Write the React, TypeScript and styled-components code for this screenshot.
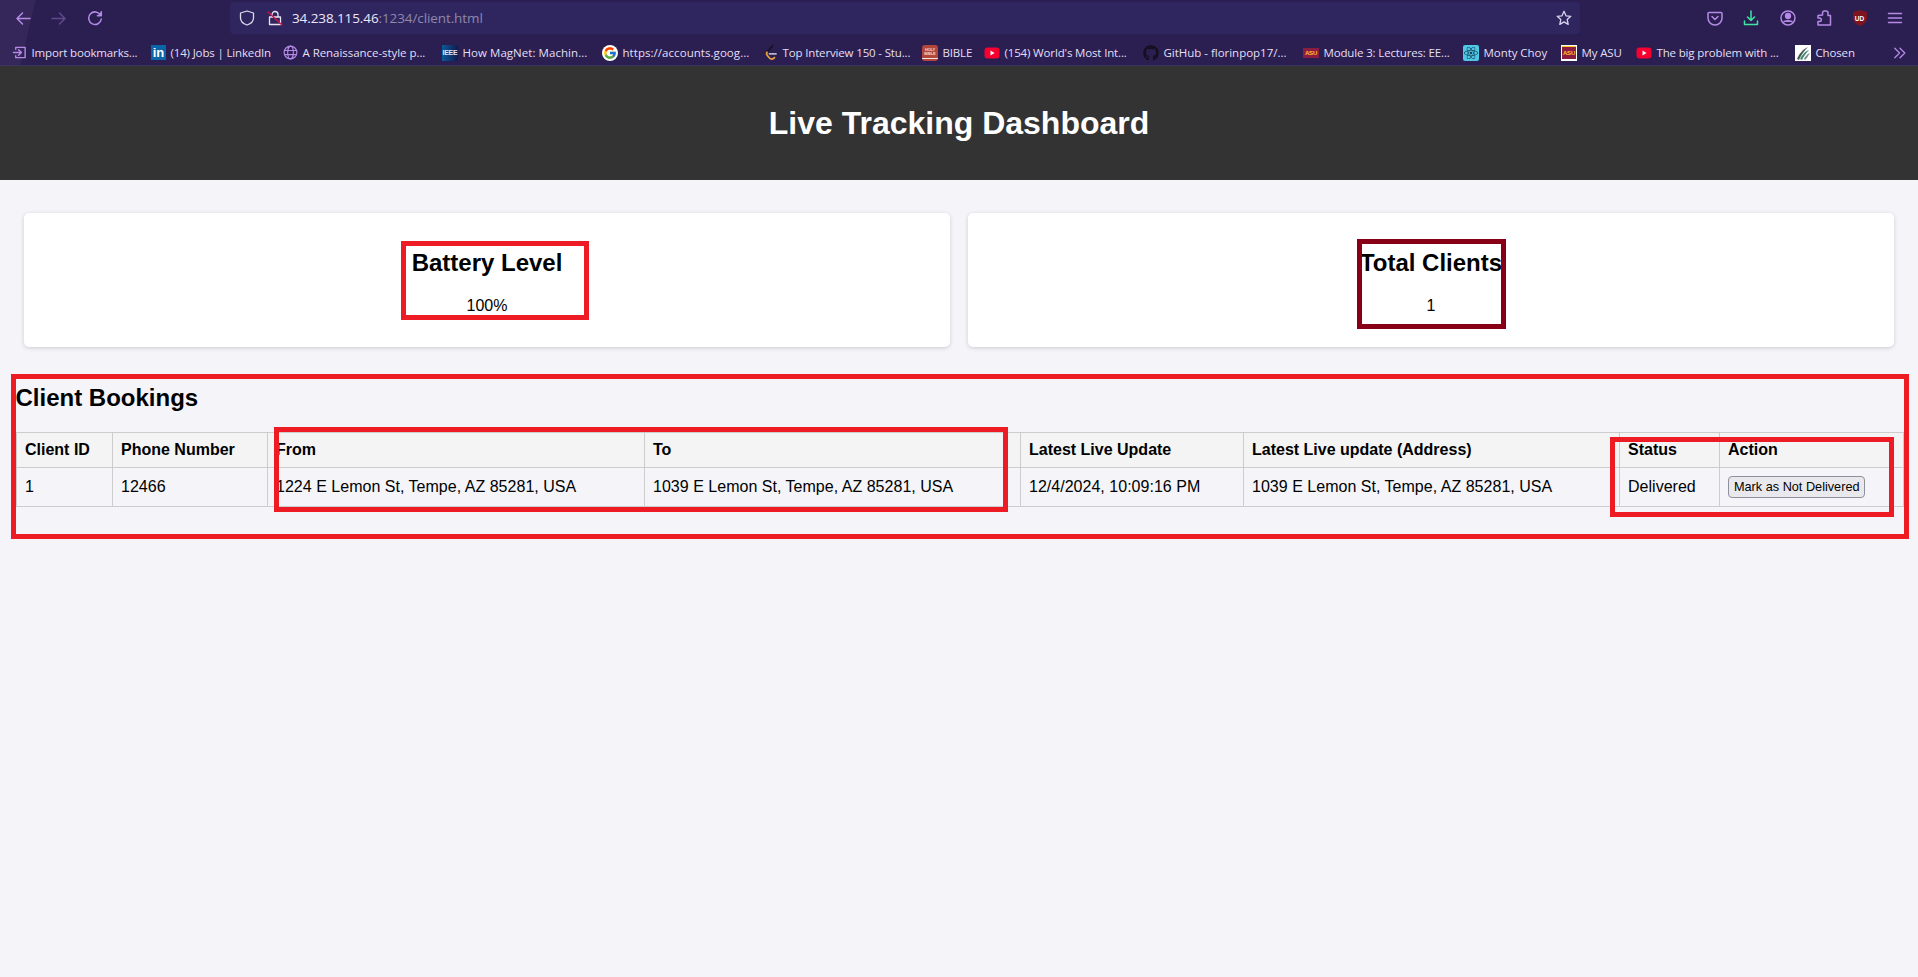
import React from "react";
import styled, { createGlobalStyle } from "styled-components";
import { FcGoogle } from "react-icons/fc";
import { FaGithub, FaReact } from "react-icons/fa";

const Global = createGlobalStyle`
  html, body { margin: 0; padding: 0; background: #f4f4f9; }
  body { font-family: "Liberation Sans", Arial, sans-serif; color: #000; overflow: hidden; }
`;

const Page = styled.div`
  position: relative;
  width: 1918px;
  height: 977px;
  overflow: hidden;
  background: #f4f4f9;
`;

const BrowserChrome = styled.div`
  height: 66px;
  background: linear-gradient(103deg, #35275a 0, #35275a 34px, #2b1f52 35px, #2b1f52 100%);
  font-family: "Open Sans", "Noto Sans", sans-serif;
  box-sizing: border-box;
`;

const Toolbar = styled.div`
  height: 36px;
  display: flex;
  align-items: center;
`;

const NavGroup = styled.div`
  width: 230px;
  padding-left: 15px;
  box-sizing: border-box;
  display: flex;
  align-items: center;
  gap: 20px;
  flex: none;
`;

const UrlBar = styled.div`
  width: 1350px;
  height: 32px;
  flex: none;
  box-sizing: border-box;
  padding: 0 8px 0 9px;
  background: #30265f;
  border-radius: 4px;
  display: flex;
  align-items: center;
`;

const UrlIcons = styled.div`
  display: flex;
  align-items: center;
  gap: 12px;
  width: 53px;
  flex: none;
`;

const UrlText = styled.div`
  flex: 1;
  font-size: 13.5px;
  color: #8e88ab;
  white-space: nowrap;
  letter-spacing: -0.1px;
`;

const UrlHost = styled.span`
  color: #eae6f6;
`;

const ActionGroup = styled.div`
  flex: 1;
  display: flex;
  align-items: center;
  padding-left: 127px;
  gap: 20.4px;
`;

const BookmarkBar = styled.div`
  height: 30px;
  padding: 4px 0 0 12px;
  display: flex;
  align-items: center;
  border-bottom: 1px solid #3c3560;
  box-sizing: border-box;
`;

const Bookmark = styled.div<{ $w: number; $ls?: number }>`
  width: ${(p) => p.$w}px;
  flex: none;
  display: flex;
  align-items: center;
  gap: 4.5px;
  font-size: 11.5px;
  color: #e3dff3;
  white-space: nowrap;
  letter-spacing: ${(p) => p.$ls ?? -0.15}px;
  overflow: hidden;
`;

const Overflow = styled.div`
  margin-left: 5px;
  display: flex;
  align-items: center;
`;

const Favicon = styled.span<{ $bg: string; $fg?: string; $size?: number }>`
  width: ${(p) => p.$size ?? 16}px;
  height: ${(p) => p.$size ?? 16}px;
  flex: none;
  display: inline-flex;
  align-items: center;
  justify-content: center;
  background: ${(p) => p.$bg};
  color: ${(p) => p.$fg || "#fff"};
  font-family: "Liberation Sans", Arial, sans-serif;
`;

const LinkedInMark = styled.span`
  font-size: 13px;
  font-weight: 700;
  line-height: 15px;
`;

const IeeeMark = styled.span`
  font-size: 7px;
  font-weight: 700;
  letter-spacing: -0.3px;
`;

const BibleCover = styled.span`
  width: 16px;
  height: 16px;
  flex: none;
  border-radius: 3px;
  background: linear-gradient(#b3463b 0 80%, #f0e6e0 80% 90%, #b3463b 90%);
  color: #f0d6c8;
  font-family: "Liberation Sans", Arial, sans-serif;
  font-size: 4px;
  font-weight: 700;
  line-height: 4.5px;
  text-align: center;
  padding-top: 3px;
  box-sizing: border-box;
`;

const AsuMark = styled.span<{ $framed?: boolean }>`
  width: 16px;
  height: ${(p) => (p.$framed ? 16 : 10)}px;
  flex: none;
  box-sizing: border-box;
  display: inline-flex;
  align-items: center;
  justify-content: center;
  background: #8c1d40;
  color: #ffc627;
  font-family: "Liberation Sans", Arial, sans-serif;
  font-size: 6px;
  font-weight: 700;
  border-top: ${(p) => (p.$framed ? "2px solid #ffc627" : "none")};
  border-bottom: ${(p) => (p.$framed ? "2px solid #fff" : "none")};
  outline: ${(p) => (p.$framed ? "1px solid #fff" : "none")};
  outline-offset: -1px;
`;

const ShieldBadge = styled.span`
  position: relative;
  width: 14px;
  height: 16px;
  display: inline-flex;
  align-items: center;
  justify-content: center;
`;

const ShieldLabel = styled.span`
  position: absolute;
  inset: 0;
  display: flex;
  align-items: center;
  justify-content: center;
  font-family: "Liberation Sans", Arial, sans-serif;
  font-size: 6.5px;
  font-weight: 700;
  color: #fff;
`;

const TitleBar = styled.header`
  height: 114px;
  background: #333;
  display: flex;
  align-items: center;
  justify-content: center;
`;

const Title = styled.h1`
  margin: 0;
  font-size: 32px;
  font-weight: 700;
  color: #fff;
`;

const Stats = styled.section`
  display: flex;
  gap: 18px;
  padding: 33px 24px 0;
`;

const Card = styled.div`
  flex: 1;
  height: 134px;
  box-sizing: border-box;
  padding: 16px;
  background: #fff;
  border-radius: 5px;
  box-shadow: 0 1px 4px rgba(0, 0, 0, 0.17);
  text-align: center;
`;

const CardTitle = styled.h2`
  margin: 20px 0;
  font-size: 24px;
  font-weight: 700;
`;

const CardValue = styled.p`
  margin: 0;
  font-size: 16px;
`;

const Bookings = styled.section`
  padding: 17px 15px 0 16px;
`;

const BookingsTitle = styled.h2`
  margin: 20px 0 20px -0.5px;
  font-size: 24px;
  font-weight: 700;
`;

const Table = styled.table`
  width: 1887px;
  table-layout: fixed;
  border-collapse: collapse;
`;

const Col = styled.col<{ $w: number }>`
  width: ${(p) => p.$w}px;
`;

const Th = styled.th`
  border: 1px solid #ccc;
  padding: 8px;
  background: #f4f4f4;
  font-size: 16px;
  font-weight: 700;
  text-align: left;
`;

const Td = styled.td`
  border: 1px solid #ccc;
  padding: 8px;
  font-size: 16px;
  text-align: left;
  letter-spacing: 0.02px;
`;

const ActionButton = styled.button`
  display: block;
  height: 22px;
  width: 137px;
  padding: 1px 5px;
  border: 1px solid #8f8f9d;
  border-radius: 4px;
  background: #e9e9ed;
  color: #000;
  font-family: "Liberation Sans", Arial, sans-serif;
  font-size: 12.7px;
  white-space: nowrap;
`;

const Annotation = styled.div<{ $x: number; $y: number; $w: number; $h: number; $c?: string }>`
  position: absolute;
  left: ${(p) => p.$x}px;
  top: ${(p) => p.$y}px;
  width: ${(p) => p.$w}px;
  height: ${(p) => p.$h}px;
  box-sizing: border-box;
  border: 5px solid ${(p) => p.$c || "#ed1c24"};
  pointer-events: none;
`;

const PURPLE = "#b48ae6";

const Ico = ({ size = 16, color = PURPLE, sw = 1.5, children }: { size?: number; color?: string; sw?: number; children: React.ReactNode }) => (
  <svg width={size} height={size} viewBox="0 0 16 16" fill="none" stroke={color} strokeWidth={sw} strokeLinecap="round" strokeLinejoin="round" style={{ flex: "none" }}>
    {children}
  </svg>
);

const YouTube = () => (
  <svg width="16" height="16" viewBox="0 0 16 16" style={{ flex: "none" }}>
    <rect x="0.5" y="2.5" width="15" height="11" rx="3" fill="#f5002f" />
    <path d="M6.5 5.6 10.6 8 6.5 10.4z" fill="#fff" />
  </svg>
);

const LeetMark = () => (
  <svg width="15" height="16" viewBox="0 0 15 16" fill="none" strokeWidth="1.8" strokeLinecap="round" style={{ flex: "none" }}>
    <path d="M9.5 1 4 7" stroke="#15121c" />
    <path d="M4 7.2C3.200 8.400 3.400 9.500 4.300 10.500L6.500 13C8 14.600 9.800 14.300 11.500 12.600" stroke="#e8a13a" />
    <path d="M6.500 8.800H13" stroke="#b9b6c4" />
  </svg>
);

const Chosen = () => (
  <svg width="16" height="16" viewBox="0 0 16 16" style={{ flex: "none" }}>
    <rect width="16" height="16" fill="#fff" />
    <path d="M2 14C4 9 8 4 13 2 9 6 6 10 4 15z" fill="#4a5a58" />
    <path d="M5 14C7 10 10 6 14 5 11 8 9 11 7 15z" fill="#3f8f78" />
    <path d="M9 14C10 12 12 9 15 8 13 11 12 13 10 15z" fill="#7a8a88" />
  </svg>
);

const bookmarks: { w: number; ls?: number; label: string; icon: React.ReactNode }[] = [
  { w: 139, label: "Import bookmarks...", icon: <Ico size={15}><path d="M1.5 8H10M7 5l3 3-3 3" /><path d="M4 4.5V2.5h10v11H4v-2" /></Ico> },
  { w: 132, label: "(14) Jobs | LinkedIn", icon: <Favicon $bg="#0a66a8" $size={15}><LinkedInMark>in</LinkedInMark></Favicon> },
  { w: 159, ls: -0.05, label: "A Renaissance-style p...", icon: <Ico size={15} sw={1.2}><circle cx="8" cy="8" r="6.8" /><ellipse cx="8" cy="8" rx="3" ry="6.8" /><path d="M1.5 5.8h13M1.5 10.2h13" /></Ico> },
  { w: 160, ls: 0.05, label: "How MagNet: Machin...", icon: <Favicon $bg="linear-gradient(90deg,#0b5a9a,#101a4f)" $fg="#dfe6f5"><IeeeMark>IEEE</IeeeMark></Favicon> },
  { w: 161, ls: 0.05, label: "https://accounts.goog...", icon: <Favicon $bg="#fff" style={{ borderRadius: 8 }}><FcGoogle size={14} /></Favicon> },
  { w: 159, label: "Top Interview 150 - Stu...", icon: <LeetMark /> },
  { w: 62, label: "BIBLE", icon: <BibleCover>HOLY<br />BIBLE</BibleCover> },
  { w: 159, label: "(154) World's Most Int...", icon: <YouTube /> },
  { w: 160, ls: -0.02, label: "GitHub - florinpop17/...", icon: <FaGithub size={16} color="#14101f" style={{ flex: "none" }} /> },
  { w: 160, label: "Module 3: Lectures: EE...", icon: <AsuMark>ASU</AsuMark> },
  { w: 98, ls: -0.05, label: "Monty Choy", icon: <Favicon $bg="#4fc8e8" $fg="#17435a" style={{ borderRadius: 2 }}><FaReact size={14} /></Favicon> },
  { w: 75, label: "My ASU", icon: <AsuMark $framed>ASU</AsuMark> },
  { w: 159, label: "The big problem with ...", icon: <YouTube /> },
  { w: 93, label: "Chosen", icon: <Chosen /> },
];

const colWidths = [96, 155, 377, 376, 223, 376, 100, 184];
const headers = ["Client ID", "Phone Number", "From", "To", "Latest Live Update", "Latest Live update (Address)", "Status", "Action"];
const cells = ["1", "12466", "1224 E Lemon St, Tempe, AZ 85281, USA", "1039 E Lemon St, Tempe, AZ 85281, USA", "12/4/2024, 10:09:16 PM", "1039 E Lemon St, Tempe, AZ 85281, USA", "Delivered"];

export default function App() {
  return (
    <Page>
      <Global />
      <BrowserChrome>
        <Toolbar>
          <NavGroup>
            <Ico><path d="M15 8.5H2M7.5 3 2 8.5 7.5 14" /></Ico>
            <Ico color="#5f4a8c"><path d="M1 8.5h13M8.5 3 14 8.5 8.5 14" /></Ico>
            <Ico><path d="M13.6 5.2A6.3 6.3 0 1 0 14.3 9" /><path d="M14.3 1.8v3.9h-3.9" fill={PURPLE} /></Ico>
          </NavGroup>
          <UrlBar>
            <UrlIcons>
              <Ico color="#dcd8ea" sw={1.3}><path d="M8 1 14.5 3v5c0 3.5-3 5.8-6.5 7C4.500 13.800 1.500 11.500 1.500 8V3z" /></Ico>
              <Ico color="#e6e2f2" sw={1.3}>
                <path d="M5 7V4.500a3 3 0 0 1 6 0V7M2.500 7h11v7.500h-11z" />
                <path d="M1 2 15 15" stroke="#d5143f" />
              </Ico>
            </UrlIcons>
            <UrlText><UrlHost>34.238.115.46</UrlHost>:1234/client.html</UrlText>
            <Ico color="#d9d3ee" sw={1.3}><path d="M8 1.300 10 5.800 14.800 6.300 11.200 9.500 12.200 14.400 8 11.900 3.800 14.400 4.800 9.500 1.200 6.300 6 5.800z" /></Ico>
          </UrlBar>
          <ActionGroup>
            <Ico><path d="M2 2.500h12a1 1 0 0 1 1 1v4.500a7 7 0 0 1-14 0V3.500a1 1 0 0 1 1-1z" /><path d="M5 6.500 8 9.500l3-3" /></Ico>
            <Ico color="#3fe3a6"><path d="M8 1v9.500M4.500 7 8 10.500 11.500 7" /><path d="M1.500 11v3.500h13V11" /></Ico>
            <Ico><circle cx="8" cy="8" r="7" /><circle cx="8" cy="6" r="2.400" fill={PURPLE} /><path d="M3.800 12c1-1.800 7.400-1.800 8.400 0" fill={PURPLE} /></Ico>
            <Ico><path d="M6.500 5V2.800a2 2 0 0 1 2-1.800h1.500a2 2 0 0 1 2 2V5.500h2.500V15H2V11.500h1.500a1.500 1.500 0 0 0 0-3.500H2V5.500z" /></Ico>
            <ShieldBadge>
              <svg width="14" height="16" viewBox="0 0 14 16"><path d="M7 0 14 2v6.500C14 12 10.500 14.600 7 16 3.500 14.600 0 12 0 8.500V2z" fill="#7d1420" /></svg>
              <ShieldLabel>UD</ShieldLabel>
            </ShieldBadge>
            <Ico><path d="M1.500 3.500h13M1.500 8h13M1.500 12.500h13" /></Ico>
          </ActionGroup>
        </Toolbar>
        <BookmarkBar>
          {bookmarks.map((b) => (
            <Bookmark key={b.label} $w={b.w} $ls={b.ls}>
              {b.icon}
              <span>{b.label}</span>
            </Bookmark>
          ))}
          <Overflow>
            <Ico size={14}><path d="M2 2.500 7.500 8 2 13.500M8 2.500 13.500 8 8 13.500" /></Ico>
          </Overflow>
        </BookmarkBar>
      </BrowserChrome>

      <TitleBar>
        <Title>Live Tracking Dashboard</Title>
      </TitleBar>

      <Stats>
        <Card>
          <CardTitle>Battery Level</CardTitle>
          <CardValue>100%</CardValue>
        </Card>
        <Card>
          <CardTitle>Total Clients</CardTitle>
          <CardValue>1</CardValue>
        </Card>
      </Stats>

      <Bookings>
        <BookingsTitle>Client Bookings</BookingsTitle>
        <Table>
          <colgroup>
            {colWidths.map((w, i) => (
              <Col key={i} $w={w} />
            ))}
          </colgroup>
          <thead>
            <tr>
              {headers.map((h) => (
                <Th key={h}>{h}</Th>
              ))}
            </tr>
          </thead>
          <tbody>
            <tr>
              {cells.map((c, i) => (
                <Td key={i}>{c}</Td>
              ))}
              <Td>
                <ActionButton>Mark as Not Delivered</ActionButton>
              </Td>
            </tr>
          </tbody>
        </Table>
      </Bookings>

      <Annotation $x={401} $y={241} $w={188} $h={79} />
      <Annotation $x={1357} $y={239} $w={149} $h={90} $c="#880015" />
      <Annotation $x={11} $y={374} $w={1898} $h={165} />
      <Annotation $x={274} $y={427} $w={734} $h={85} />
      <Annotation $x={1610} $y={437} $w={284} $h={80} />
    </Page>
  );
}
